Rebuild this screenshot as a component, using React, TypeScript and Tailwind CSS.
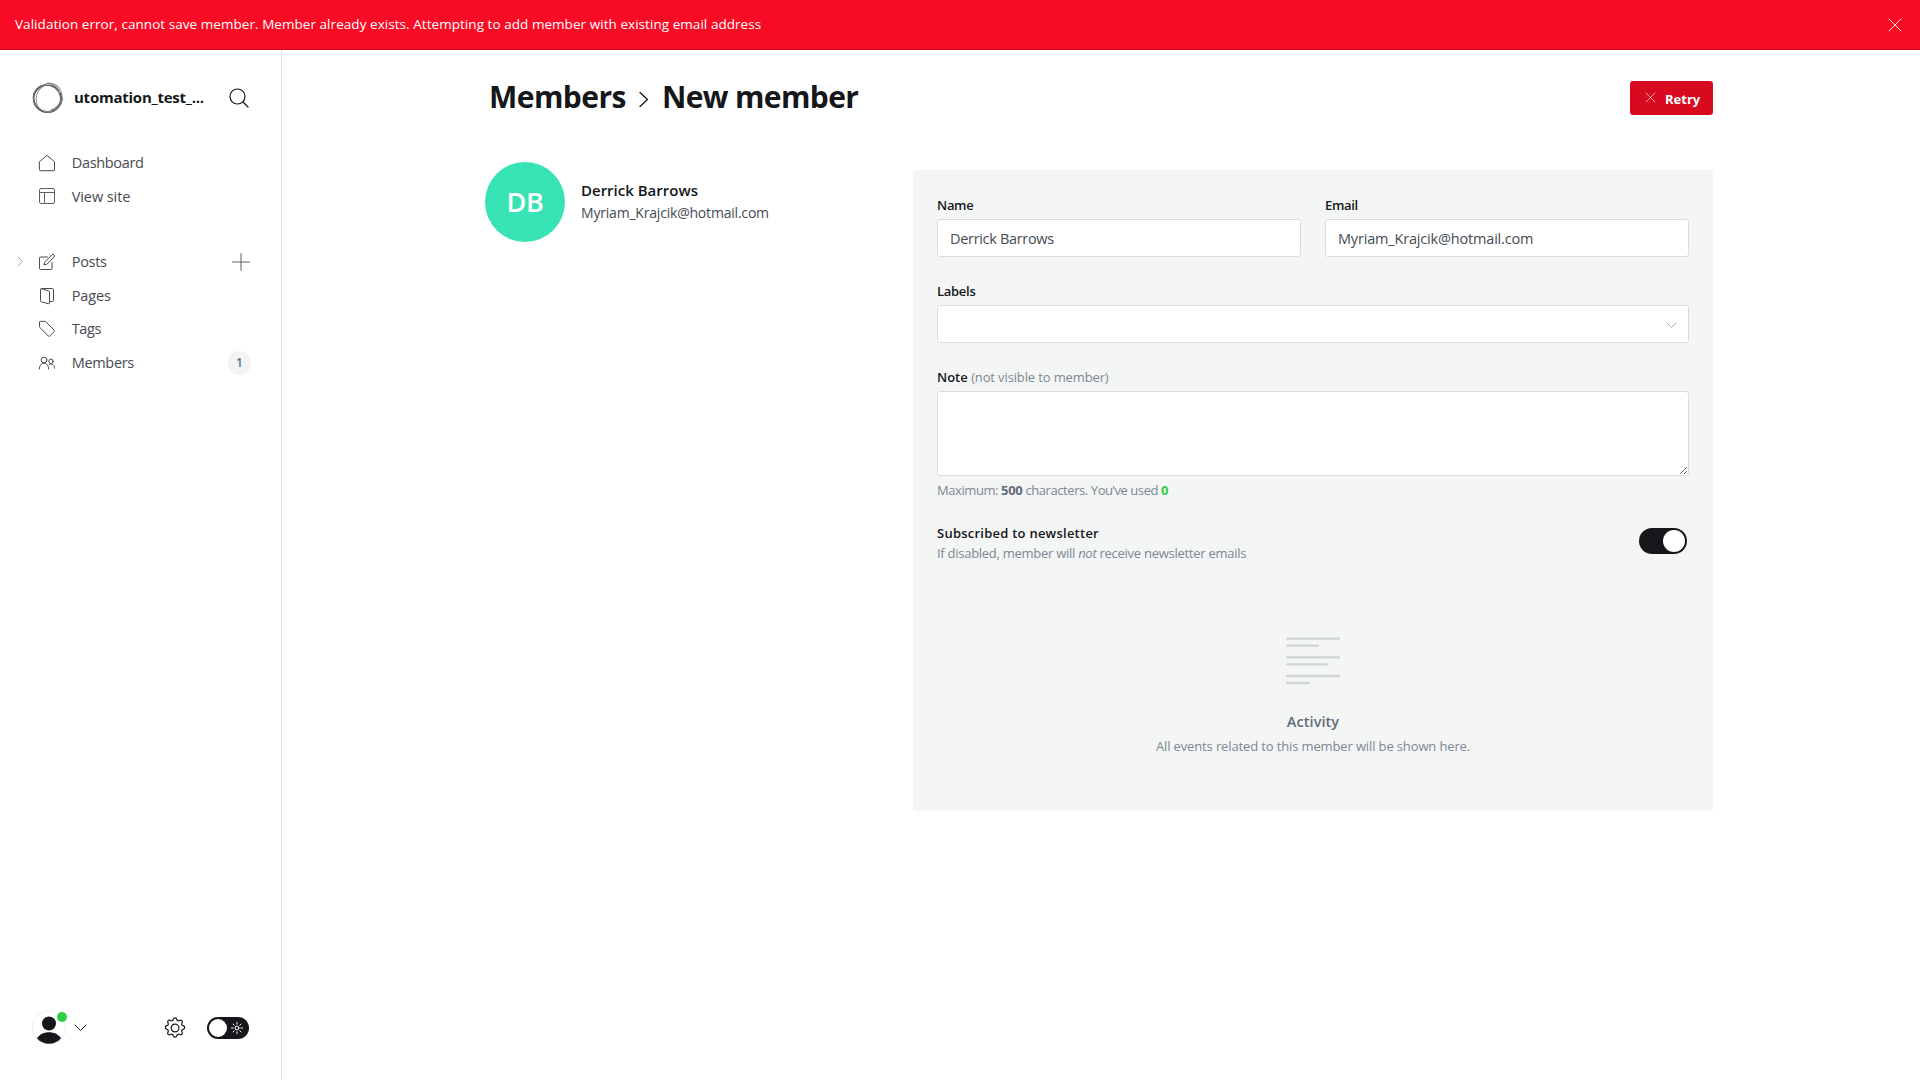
import { ReactNode } from "react";

function Svg({ w, h, className = "", sw = 1, children }: { w: number; h: number; className?: string; sw?: number; children: ReactNode }) {
  return (
    <svg width={w} height={h} viewBox={`0 0 ${w} ${h}`} fill="none" stroke="currentColor" strokeWidth={sw} strokeLinecap="round" strokeLinejoin="round" className={`block shrink-0 ${className}`}>
      {children}
    </svg>
  );
}

function Logo() {
  return (
    <Svg w={32} h={32} className="text-[#3a3b3d]">
      <ellipse cx="15.600" cy="16.500" rx="14" ry="13.600" strokeWidth="1.600" />
      <ellipse cx="15.300" cy="16.800" rx="13.800" ry="13" strokeWidth="1.200" stroke="#6d6e70" transform="rotate(35 16 16)" />
      <ellipse cx="17" cy="15.600" rx="12.600" ry="14.200" strokeWidth="0.900" stroke="#8b8c8e" transform="rotate(24 16 16)" />
      <path d="M15 1.800c6.500-.8 12 2.600 13.500 8.200" strokeWidth="2.200" stroke="#b5b6b8" />
      <path d="M14 1.700c4-1 9 .3 11.500 3" strokeWidth="0.800" stroke="#77787a" />
      <path d="M29.800 17c-1 5-4.200 9.500-9.800 11.500" strokeWidth="2.400" stroke="#77787a" />
    </Svg>
  );
}

const icons = {
  home: (
    <Svg w={18} h={18}>
      <path d="M1.500 7.700 9 1.300l7.500 6.400v8.300a.7.700 0 0 1-.7.700H2.200a.7.700 0 0 1-.7-.7z" />
    </Svg>
  ),
  site: (
    <Svg w={18} h={18} className="text-[#5d6268]">
      <rect x="1.500" y="1.500" width="15" height="15" rx="1.500" />
      <path d="M1.500 5.500h15M6.500 5.500v11" />
    </Svg>
  ),
  posts: (
    <Svg w={18} h={18}>
      <path d="M9.500 4H2.600A1.100 1.100 0 0 0 1.500 5.100v10.300a1.100 1.100 0 0 0 1.100 1.100h10.300a1.100 1.100 0 0 0 1.100-1.100V9.500" />
      <path d="m7 8.800 6.800-6.900a1.500 1.500 0 0 1 2.200 2.200L9.200 11l-3 .8z" />
    </Svg>
  ),
  pages: (
    <Svg w={18} h={18}>
      <path d="M2.500 2.500v11.300a1 1 0 0 0 .7 1l7.300 1.900a.8.800 0 0 0 1-.8V5a1 1 0 0 0-.7-1L3.500 1.700a.8.800 0 0 0-1 .8z" />
      <path d="M3.500 1.500h10.800a1.200 1.200 0 0 1 1.200 1.200v10.600a1.200 1.200 0 0 1-1.200 1.200h-2.500" />
    </Svg>
  ),
  tags: (
    <Svg w={18} h={18}>
      <path d="M1.500 2.300v4.400a1 1 0 0 0 .3.700l8.600 8.700a.9.900 0 0 0 1.300 0l4.600-4.600a.9.900 0 0 0 0-1.300L7.600 1.600a1 1 0 0 0-.7-.3l-4.500.1a.9.900 0 0 0-.9.900z" />
    </Svg>
  ),
  members: (
    <Svg w={18} h={18}>
      <circle cx="6" cy="6" r="2.900" />
      <path d="M1.300 15c.2-3.500 2.100-5.800 4.700-5.800s4.500 2.300 4.700 5.800" />
      <circle cx="13" cy="7.300" r="2.200" />
      <path d="M11.400 10.200c2.600-1 5.100.9 5.200 4" />
    </Svg>
  ),
};

function NavItem({ icon, label, tracking, chevron, children }: { icon: ReactNode; label: string; tracking: string; chevron?: boolean; children?: ReactNode }) {
  return (
    <div className="flex h-[33.600px] items-center pl-[17px] text-[14.500px] text-[#454b52]">
      <span className="w-[21px] text-[#a3a8ad]">
        {chevron && (
          <Svg w={7} h={11}>
            <path d="m1 1 4.500 4.500L1 10" />
          </Svg>
        )}
      </span>
      {icon}
      <span className={`ml-[15.700px] ${tracking}`}>{label}</span>
      {children}
    </div>
  );
}

function Field({ label, tracking, children, className = "" }: { label: ReactNode; tracking: string; children: ReactNode; className?: string }) {
  return (
    <div className={className}>
      <div className={`mb-1 h-5 text-[13px] leading-5 font-semibold text-[#15171a] ${tracking}`}>{label}</div>
      {children}
    </div>
  );
}

const box = "w-full rounded-[3px] border border-[#dadddf] bg-white outline-none block";

export default function App() {
  return (
    <div className="flex h-[1080px] w-[1920px] flex-col overflow-hidden bg-white font-['Open_Sans','Noto_Sans',sans-serif] text-[#15171a]">
      <div className="flex h-[50px] shrink-0 items-center justify-between border-b border-[#c50a20] bg-[#f80b24] pr-[18px] pl-[15px] text-white">
        <span className="mb-[2px] text-[13.500px] leading-5 tracking-[0.050px]">
          Validation error, cannot save member. Member already exists. Attempting to add member with existing email address
        </span>
        <Svg w={14} h={14} sw={0.900}>
          <path d="m1 1 12 12M13 1 1 13" />
        </Svg>
      </div>

      <div className="flex min-h-0 flex-1">
        <aside className="flex w-[282px] shrink-0 flex-col border-r border-[#dfe1e3]">
          <div className="mt-8 flex h-8 items-center pl-8">
            <Logo />
            <span className="mb-[2px] ml-[10px] text-[15px] leading-5 font-bold tracking-[-0.240px]">utomation_test_...</span>
            <Svg w={20} h={20} className="mr-8 ml-auto" sw={1.200}>
              <circle cx="8.500" cy="8.500" r="7.500" />
              <path d="m14 14 5 5" />
            </Svg>
          </div>

          <nav className="mt-[32px] flex flex-col">
            <NavItem icon={icons.home} label="Dashboard" tracking="tracking-[-0.320px]" />
            <NavItem icon={icons.site} label="View site" tracking="tracking-[-0.080px]" />
            <div className="h-[32px]" />
            <NavItem icon={icons.posts} label="Posts" tracking="tracking-[-0.280px]" chevron>
              <Svg w={18} h={18} className="mr-[31px] ml-auto text-[#5d6268]">
                <path d="M9 .5v17M.5 9h17" />
              </Svg>
            </NavItem>
            <NavItem icon={icons.pages} label="Pages" tracking="tracking-[-0.120px]" />
            <NavItem icon={icons.tags} label="Tags" tracking="tracking-[-0.350px]" />
            <NavItem icon={icons.members} label="Members" tracking="tracking-[-0.320px]">
              <span className="mr-[30px] ml-auto flex h-6 w-[23px] items-center justify-center rounded-full bg-[#f1f3f5] pt-px text-[12px] leading-none font-semibold text-[#626d79]">1</span>
            </NavItem>
          </nav>

          <div className="mt-auto mb-[35px] flex h-[35px] items-center pl-8">
            <div className="relative">
              <svg width="34" height="35" viewBox="0 0 34 35" className="block">
                <circle cx="17" cy="17.500" r="16.500" fill="#fff" stroke="#eceeef" />
                <circle cx="17" cy="13.500" r="7" fill="#15171a" />
                <path d="M5 28.300c2.500-4 7-6 12-6s9.500 2 12 6c-3 3.600-7.300 5.500-12 5.500s-9-1.900-12-5.500z" fill="#15171a" />
              </svg>
              <span className="absolute top-[2px] left-[25px] size-[10px] rounded-full bg-[#30cf43]" />
            </div>
            <Svg w={13} h={8} className="ml-2">
              <path d="m1 1 5.500 5.500L12 1" />
            </Svg>
            <Svg w={22} h={22} className="ml-[77px]" sw={1.200}>
              <circle cx="11" cy="11" r="3.900" />
              <path
                transform="translate(-0.500 -0.500) scale(1.045)"
                d="M9.300 2.700c.4-1.900 3-1.900 3.400 0 .3 1.400 1.500 1.800 2.600 1.100 1.700-1 3.400.7 2.400 2.400-.7 1.200-.2 2.300 1.100 2.600 1.900.5 1.900 3 0 3.500-1.300.3-1.800 1.400-1.100 2.600 1 1.700-.7 3.400-2.400 2.400-1.200-.7-2.300-.2-2.600 1.100-.4 1.900-3 1.900-3.400 0-.3-1.300-1.500-1.800-2.600-1.100-1.700 1-3.400-.7-2.400-2.400.7-1.200.2-2.300-1.100-2.600-1.900-.5-1.900-3 0-3.500 1.300-.3 1.800-1.400 1.100-2.600-1-1.700.7-3.400 2.400-2.400 1.100.7 2.300.3 2.600-1.100z"
              />
            </Svg>
            <div className="ml-[21px] flex h-[22px] w-[42px] items-center justify-between rounded-full bg-[#15171a] pr-[6px] pl-[2px] text-white">
              <span className="size-[18px] rounded-full bg-white" />
              <Svg w={12} h={12}>
                <circle cx="6" cy="6" r="1.900" />
                <path d="M6 .5v1.700M6 9.800v1.700M.5 6h1.700M9.800 6h1.700M2 2l1.200 1.200M8.800 8.800 10 10M10 2 8.800 3.200M3.200 8.800 2 10" />
              </Svg>
            </div>
          </div>
        </aside>

        <main className="w-[1431px] pl-[203px]">
          <header className="mt-[31px] flex h-[34px] items-center pl-[2px]">
            <h1 className="mb-[2px] ml-[2px] flex items-center text-[30px] leading-[34px] font-bold">
              <span className="tracking-[-0.550px]">Members</span>
              <Svg w={10} h={17} className="mt-[5px] ml-[13px]" sw={1.300}>
                <path d="m1 1.500 7.500 7L1 15.500" />
              </Svg>
              <span className="ml-[13px] tracking-[-0.620px]">New member</span>
            </h1>
            <button className="ml-auto flex h-[34px] w-[83px] items-center rounded-[3px] bg-[#d70a20] pl-[15px] text-white">
              <Svg w={11} h={11} sw={0.600} className="mb-[2px]">
                <path d="m1 1 9 9M10 1l-9 9" />
              </Svg>
              <span className="mt-px ml-[9px] text-[13px] leading-5 font-bold">Retry</span>
            </button>
          </header>

          <div className="mt-[47px] flex justify-between">
            <div className="flex h-20">
              <div className="flex size-20 items-center justify-center rounded-full bg-[#37e2b5] text-[27px] leading-[36px] font-semibold tracking-[-0.300px] text-white">DB</div>
              <div className="mt-[17px] ml-4">
                <div className="h-[23px] text-[15px] leading-[22px] font-semibold">Derrick Barrows</div>
                <div className="h-[22px] text-[14px] leading-[22px] tracking-[-0.200px] text-[#454b52]">Myriam_Krajcik@hotmail.com</div>
              </div>
            </div>

            <section className="mt-2 h-[641px] w-[800px] rounded-[2px] bg-[#f4f6f6] px-6 pt-[25px]">
              <div className="grid grid-cols-2 gap-6">
                <Field label="Name" tracking="tracking-[-0.300px]">
                  <input readOnly value="Derrick Barrows" className={`${box} h-[38px] px-3 text-[14.500px] tracking-[-0.320px] text-[#454b52]`} />
                </Field>
                <Field label="Email" tracking="tracking-[-0.300px]">
                  <input readOnly value="Myriam_Krajcik@hotmail.com" className={`${box} h-[38px] px-3 text-[14.500px] tracking-[-0.180px] text-[#454b52]`} />
                </Field>
              </div>
              <Field label="Labels" tracking="tracking-[-0.280px]" className="mt-6">
                <div className={`${box} h-[38px]`}>
                  <div className="flex h-full items-center justify-end pr-[11px] text-[#a9adb2]">
                    <Svg w={11} h={7} className="mt-[2px]">
                      <path d="m1 1 4.500 4.500L10 1" />
                    </Svg>
                  </div>
                </div>
              </Field>
              <Field
                label={
                  <>
                    Note <span className="font-normal tracking-[-0.130px] text-[#7c8792]">(not visible to member)</span>
                  </>
                }
                tracking="tracking-normal"
                className="mt-6"
              >
                <textarea readOnly className={`${box} h-[85px] resize-y`} />
              </Field>
              <p className="mt-1 h-5 text-[13px] leading-5 tracking-[-0.420px] text-[#7c8792]">
                Maximum: <b className="tracking-[-0.300px] text-[#626d79]">500</b> characters. You’ve used <b className="text-[#30cf43]">0</b>
              </p>
              <div className="mt-[23px] flex h-10 justify-between">
                <div>
                  <h4 className="h-5 text-[13px] leading-5 font-semibold tracking-[0.240px]">Subscribed to newsletter</h4>
                  <p className="h-5 text-[13px] leading-5 tracking-[-0.270px] text-[#7c8792]">
                    If disabled, member will <em>not</em> receive newsletter emails
                  </p>
                </div>
                <div className="mt-[5px] mr-[2px] flex h-[26px] w-12 items-center justify-end rounded-full bg-[#15171a] pr-[2px]">
                  <span className="size-[22px] rounded-full bg-white" />
                </div>
              </div>
              <div className="mt-[74px] flex flex-col items-center">
                <svg width="54" height="48" viewBox="0 0 54 48" stroke="#d0d4d7" strokeWidth="2.300" strokeLinecap="round">
                  <path d="M1.200 1.700h51.600M1.200 8.700h30.600M1.200 20.400h51.600M1.200 27.400h39.600M1.200 39h51.600M1.200 46h21.600" />
                </svg>
                <h4 className="mt-[27px] h-5 text-[14.500px] leading-5 font-semibold tracking-[0.060px] text-[#626d79]">Activity</h4>
                <p className="mt-[4px] h-5 text-[13px] leading-5 tracking-[-0.130px] text-[#7c8792]">All events related to this member will be shown here.</p>
              </div>
            </section>
          </div>
        </main>
      </div>
    </div>
  );
}
